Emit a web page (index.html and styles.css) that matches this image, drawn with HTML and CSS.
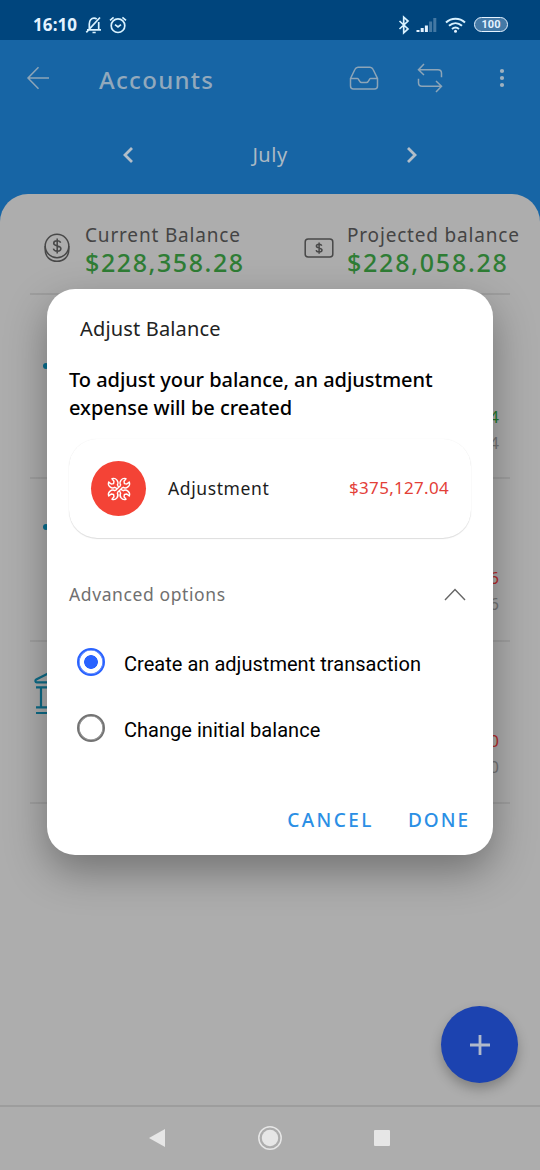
FILE: index.html
```html
<!DOCTYPE html>
<html lang="en">
<head>
<meta charset="utf-8">
<title>Accounts</title>
<link rel="stylesheet" href="styles.css">
</head>
<body>
<div class="screen">
  <header class="status">
    <div class="status-left">
      <span class="clock">16:10</span>
      <svg class="st-bell" width="18" height="20" viewBox="0 0 18 20"><path d="M4.300 14.500V9c0-3.600 2-5.800 4.700-5.800 1 0 2 .3 2.700.9M13.700 7v7.500M2 14.800h14M7.500 17.500h3.200M1.300 17.300L15 2.500"/></svg>
      <svg class="st-alarm" width="18" height="18" viewBox="0 0 18 18"><circle cx="9" cy="9.700" r="6.800"/><path d="M6 8.600l3 2.400 3-2.400M1 4.300l3.600-3M17 4.300l-3.600-3"/></svg>
    </div>
    <div class="status-right">
      <svg width="12" height="18" viewBox="0 0 12 18"><path d="M1.500 5l8.500 8-4.300 3.800V1.200L10 5l-8.500 8"/></svg>
      <svg class="st-signal" width="21" height="16" viewBox="0 0 21 16"><path d="M.5 13h3v2h-3zM4.700 11h3v4h-3zM8.900 8.500h3V15h-3z"/><path class="dim" d="M13.100 4.500h3V15h-3zM17.300 1h3v14h-3z"/></svg>
      <svg class="st-wifi" width="21" height="16" viewBox="0 0 21 16"><path d="M1 5.500c5.500-5 13.500-5 19 0M4 8.800c4-3.500 9-3.500 13 0M7 12c2.200-1.800 4.800-1.800 7 0"/><circle cx="10.500" cy="14.200" r="1.500"/></svg>
      <span class="battery">100</span>
    </div>
  </header>

  <div class="appbar">
    <svg class="back" width="24" height="24" viewBox="0 0 24 24"><path d="M23 12H2M12.500 1.200L2 12l10.500 10.800"/></svg>
    <h1 class="title">Accounts</h1>
    <svg class="inbox" width="30" height="24" viewBox="0 0 30 24"><path d="M1.500 12.500L6 3.300C6.700 1.700 7.500 1.200 9 1.200h12c1.500 0 2.300.5 3 2.100l4.500 9.200V20c0 2-1 3-3 3h-21c-2 0-3-1-3-3zM1.500 12.500h7c1.500 0 1.500 4 4 4h5c2.500 0 2.500-4 4-4h7"/></svg>
    <svg class="repeat" width="26" height="30" viewBox="0 0 26 30"><path d="M7 1L1.500 6.700 7 12M1.500 6.700H21c2.500 0 3.500 1.500 3.500 3.500v4M19 18l5.500 5.300L19 29M24.500 23.300H5c-2.500 0-3.500-1.500-3.500-3.500v-4"/></svg>
    <svg class="more" width="6" height="20" viewBox="0 0 6 20"><circle cx="3" cy="3" r="2.100"/><circle cx="3" cy="10" r="2.100"/><circle cx="3" cy="17" r="2.100"/></svg>
  </div>

  <div class="months">
    <svg width="12" height="18" viewBox="0 0 12 18"><path d="M10 2L3 9l7 7"/></svg>
    <span class="month">July</span>
    <svg width="12" height="18" viewBox="0 0 12 18"><path d="M2 2l7 7-7 7"/></svg>
  </div>

  <main class="sheet">
    <section class="balances">
      <div class="balance current">
        <svg width="26" height="30" viewBox="0 0 26 30"><circle cx="13" cy="13" r="11.800"/><path d="M1.200 13v4c0 6.500 5 11.300 11.800 11.300S24.800 23.500 24.800 17v-4M16.600 9.800c-.4-1.300-1.700-2-3.400-2-2 0-3.500.9-3.500 2.500 0 3.700 7.200 1.700 7.200 5.300 0 1.700-1.600 2.600-3.600 2.600-2.100 0-3.600-.9-3.900-2.500M13.200 5.500v15"/></svg>
        <div><div class="label">Current Balance</div><div class="amount">$228,358.28</div></div>
      </div>
      <div class="balance projected">
        <svg width="30" height="20" viewBox="0 0 30 20"><rect x="1.200" y="1" width="27.600" height="18" rx="3"/><path d="M17.700 7.700c-.3-1-1.300-1.500-2.600-1.500-1.500 0-2.700.7-2.700 1.900 0 2.800 5.600 1.300 5.600 4 0 1.300-1.200 2-2.800 2s-2.800-.7-3-1.900M15.100 4.500v11.300"/></svg>
        <div><div class="label">Projected balance</div><div class="amount wide">$228,058.28</div></div>
      </div>
    </section>
    <section class="account first">
      <i class="dot"></i>
      <div class="sums"><span class="plus">4</span><span class="sub">4</span></div>
    </section>
    <section class="account">
      <i class="dot"></i>
      <div class="sums"><span class="minus">6</span><span class="sub">6</span></div>
    </section>
    <section class="account">
      <svg class="bank" width="46" height="44" viewBox="0 0 46 44"><path d="M23 -2L2.200 8.500C.8 9.300 1.300 11.300 2.800 11.300h40.400c1.500 0 2-2 .6-2.800zM2 16.300h42M7 16.300v20M39 16.300v20M2 36.300h42M2 42h42"/></svg>
      <div class="sums"><span class="minus">0</span><span class="sub">0</span></div>
    </section>
  </main>

  <nav class="nav">
    <svg width="18" height="20" viewBox="0 0 18 20"><path d="M17 1v18L1 10z"/></svg>
    <svg width="26" height="26" viewBox="0 0 26 26"><circle cx="13" cy="13" r="8.200"/><circle class="ring" cx="13" cy="13" r="11.200"/></svg>
    <svg width="18" height="18" viewBox="0 0 18 18"><rect x="1" y="1" width="16" height="16" rx="1"/></svg>
  </nav>

  <button class="fab"><svg width="20" height="20" viewBox="0 0 20 20"><path d="M10 0v20M0 10h20"/></svg></button>

  <div class="dialog">
    <h2 class="dialog-title">Adjust Balance</h2>
    <p class="message">To adjust your balance, an adjustment<br>expense will be created</p>
    <div class="card">
      <span class="badge">
        <svg width="24" height="24" viewBox="0 0 24 24">
          <defs><path id="head" d="M10.200 8.200A4.400 4.400 0 0 0 5 1.700L7 4.200 6.600 6.600 4.200 7 1.700 5A4.400 4.400 0 0 0 8.200 10.200"/></defs>
          <use href="#head"/>
          <use href="#head" transform="rotate(90 12 12)"/>
          <use href="#head" transform="rotate(180 12 12)"/>
          <use href="#head" transform="rotate(270 12 12)"/>
          <path d="M13.800 8.200L8.200 13.800M15.800 10.200L10.200 15.800M10.200 8.200l1.300 1.300M8.200 10.200l1.300 1.300M13.800 15.800l-1.300-1.300M15.800 13.800l-1.300-1.300"/>
        </svg>
      </span>
      <span class="card-name">Adjustment</span>
      <span class="card-sum">$375,127.04</span>
    </div>
    <div class="advanced">
      <span>Advanced options</span>
      <svg width="22" height="13" viewBox="0 0 22 13"><path d="M1 12L11 1.500 21 12"/></svg>
    </div>
    <div class="option"><i class="radio on"></i><span>Create an adjustment transaction</span></div>
    <div class="option"><i class="radio"></i><span>Change initial balance</span></div>
    <div class="actions"><span class="cancel">CANCEL</span><span class="done">DONE</span></div>
  </div>
</div>
</body>
</html>
```

FILE: styles.css
```css
* { box-sizing: border-box; }
body { margin: 0; font-family: "Noto Sans", sans-serif; }
svg { display: block; flex: none; fill: none; overflow: visible; }
h1, h2, p { margin: 0; font-weight: 400; }

.screen {
  position: relative;
  width: 540px;
  height: 1170px;
  display: flex;
  flex-direction: column;
  overflow: hidden;
  background: #1765a5;
}

.status {
  height: 40px;
  background: #00457d;
  display: flex;
  justify-content: space-between;
  padding: 9px 32px 0 33px;
  color: #e4f2ff;
  flex: none;
}
.status svg { stroke: #d9f2ff; stroke-width: 1.7; }
.status-left, .status-right { display: flex; align-items: center; height: 32px; }
.clock { font: 700 17px/32px "Noto Sans", sans-serif; width: 46px; letter-spacing: .1px; }
.st-bell { margin-left: 6px; }
.status .st-alarm { margin-left: 6px; }
.status-right svg { margin-right: 7px; }
.status-right .st-signal { fill: #e4f2ff; stroke: none; margin: 0 8px 0 -1px; }
.st-signal .dim { fill: #4478a3; }
.status-right .st-wifi { stroke-width: 2; margin-right: 8px; }
.st-wifi circle { fill: #e4f2ff; stroke: none; }
.battery {
  width: 34px;
  height: 15px;
  border: 1.5px solid #e4f2ff;
  border-radius: 8px;
  background: #4479a6;
  font: 700 11px/13px Roboto, sans-serif;
  text-align: center;
}
.status-right .battery { margin-top: -2px; }

.appbar { height: 78px; flex: none; display: flex; align-items: center; padding: 0 0 2px 26px; }
.appbar svg { stroke: #8da5b8; stroke-width: 1.500; }
.title { margin-left: 49px; width: 250px; font-size: 24px; font-weight: 500; line-height: 32px; letter-spacing: 1.300px; color: #92a9bc; padding-top: 4px; }
.repeat { margin-left: 38px; }
.appbar .more { margin-left: 56px; fill: #a0b1bf; stroke: none; }

.months { height: 76px; flex: none; display: flex; align-items: center; justify-content: space-between; padding: 0 122px 2px 122px; }
.months svg { stroke: #b3bec8; stroke-width: 2.800; }
.month { color: #abb9c4; font-size: 20px; letter-spacing: .5px; line-height: 28px; }

.sheet { height: 911px; flex: none; background: #adadad; border-radius: 28px 28px 0 0; padding: 0 30px; }
.balances { height: 101px; border-bottom: 2px solid #9e9e9e; display: flex; padding-top: 28px; }
.balance { display: flex; flex: none; white-space: nowrap; }
.current { width: 274px; padding-left: 14px; gap: 15px; }
.current svg { margin-top: 11px; }
.projected { gap: 13px; width: 220px; }
.projected svg { margin-top: 16px; }
.balance svg { stroke: #484848; stroke-width: 1.500; }
.label { color: #444; font-size: 19px; line-height: 26px; letter-spacing: .82px; }
.amount { color: #2f7d35; font-size: 25px; line-height: 28px; font-weight: 500; letter-spacing: 1.580px; }
.wide { letter-spacing: 1.750px; }

.account { height: 162.500px; border-bottom: 2px solid #a0a0a0; display: flex; justify-content: space-between; padding: 31px 11px 0 4px; }
.first { height: 184px; padding-top: 54px; }
.dot { width: 6px; height: 6px; border-radius: 50%; background: #087091; margin: 14px 0 0 9px; }
.bank { stroke: #0d6c88; stroke-width: 2.200; }
.account .bank { margin-top: -2px; }
.sums { display: flex; flex-direction: column; text-align: right; font-size: 17px; line-height: 26px; padding-top: 55px; }
.plus { color: #247b2b; }
.minus { color: #b72c2c; }
.sub { color: #777; }

.nav { flex: 1; background: #adadad; border-top: 2px solid #9d9d9d; display: flex; align-items: center; justify-content: space-between; padding: 0 149px 2px 148px; }
.nav svg { fill: #e6e6e6; }
.nav .ring { fill: none; stroke: #e6e6e6; stroke-width: 1.500; }

.fab {
  position: absolute;
  left: 441px;
  top: 1006px;
  width: 77px;
  height: 77px;
  border: 0;
  border-radius: 50%;
  background: #1c43b0;
  display: flex;
  align-items: center;
  justify-content: center;
  box-shadow: 0 6px 12px rgba(0, 0, 0, .25);
}
.fab svg { stroke: #b1b9ca; stroke-width: 2.800; }

.dialog {
  position: absolute;
  left: 47px;
  top: 289px;
  width: 446px;
  height: 566px;
  border-radius: 28px;
  background: #fff;
  box-shadow: 0 16px 40px rgba(0, 0, 0, .34);
  padding: 25px 22px 0;
  white-space: nowrap;
}
.dialog-title { font-size: 20px; line-height: 30px; padding-left: 11px; color: #222; letter-spacing: .16px; }
.message { margin-top: 22px; font-size: 20px; font-weight: 500; line-height: 27.500px; letter-spacing: -.03px; color: #000; }
.card {
  margin-top: 18px;
  height: 99px;
  border-radius: 28px;
  padding: 0 22px;
  display: flex;
  align-items: center;
  box-shadow: 0 1px 1px #ddd, 0 0 1px #e8e8e8;
}
.badge { width: 55px; height: 55px; border-radius: 50%; background: #f44336; display: flex; align-items: center; justify-content: center; }
.badge svg { stroke: #fff; stroke-width: 1.400; stroke-linejoin: round; }
.card-name { margin-left: 22px; font-size: 17.500px; letter-spacing: .6px; color: #1c1c1c; padding-bottom: 2px; }
.card-sum { margin-left: auto; font-size: 17px; color: #e34038; letter-spacing: .3px; padding-bottom: 2px; }
.advanced { height: 30px; margin-top: 41px; display: flex; align-items: center; justify-content: space-between; padding-right: 5px; font-size: 17.500px; letter-spacing: .6px; color: #707070; }
.advanced svg { stroke: #666; stroke-width: 1.400; }
.option { height: 66px; display: flex; align-items: center; padding-left: 8px; gap: 19px; font: 20px/28px Roboto, sans-serif; letter-spacing: .03px; color: #000; }
.advanced + .option { margin-top: 20px; }
.option span { padding-top: 3px; }
.radio { width: 28px; height: 28px; border: 2.500px solid #737373; border-radius: 50%; box-shadow: inset 0 0 0 .6px #737373; }
.on { border-color: #2962ff; background: radial-gradient(circle, #2962ff 6.500px, transparent 7.200px); box-shadow: inset 0 0 0 .6px #2962ff; }
.actions { display: flex; justify-content: flex-end; gap: 34px; margin-top: 44px; font-size: 19px; line-height: 30px; font-weight: 500; color: #2b8fe5; }
.cancel { letter-spacing: 2.450px; }
.done { letter-spacing: 2px; padding-right: 1px; }
```
